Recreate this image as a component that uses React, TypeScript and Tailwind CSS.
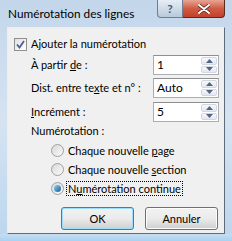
import React from 'react';

const font = { fontFamily: 'Lato, "Liberation Sans", sans-serif' };

function Spin({ value }: { value: string }) {
  return (
    <div className="flex h-[20px] w-[66px] items-stretch border border-[#abadb3] border-t-[#8e8f8f] bg-white">
      <div className="flex flex-1 items-center pl-[3px] text-[12px] text-black">{value}</div>
      <div className="my-[1px] mr-[1px] flex w-[16px] flex-col gap-[1px]">
        <div className="flex flex-1 items-center justify-center rounded-[2px] border border-[#d3d8e0] bg-gradient-to-b from-[#f7f8fa] to-[#e3e7ee]">
          <svg width="7" height="4" viewBox="0 0 7 4">
            <path d="M0 4 L3.5 0 L7 4 Z" fill="#4f6685" />
          </svg>
        </div>
        <div className="flex flex-1 items-center justify-center rounded-[2px] border border-[#d3d8e0] bg-gradient-to-b from-[#f7f8fa] to-[#e3e7ee]">
          <svg width="7" height="4" viewBox="0 0 7 4">
            <path d="M0 0 L3.5 4 L7 0 Z" fill="#4f6685" />
          </svg>
        </div>
      </div>
    </div>
  );
}

function Row({ label, value }: { label: React.ReactNode; value: string }) {
  return (
    <div className="flex h-[20px] items-center justify-between pl-[23px] pr-[5px]">
      <span className="whitespace-nowrap">{label}</span>
      <Spin value={value} />
    </div>
  );
}

function Radio({ checked, children }: { checked?: boolean; children: React.ReactNode }) {
  return (
    <div className="flex h-[19px] items-center pl-[43px]">
      <div className="flex h-[13px] w-[13px] items-center justify-center rounded-full border border-[#a0a0a0] bg-gradient-to-br from-[#d8d8d8] to-[#fafafa]">
        {checked && <div className="h-[7px] w-[7px] rounded-full bg-gradient-to-br from-[#8fd0f5] to-[#0d5d9c]" />}
      </div>
      <span className={'ml-[3px] whitespace-nowrap px-[1px] leading-[13px] ' + (checked ? 'outline-1 outline-dotted outline-black' : '')}>
        {children}
      </span>
    </div>
  );
}

const App: React.FC = () => {
  return (
    <div
      className="relative flex h-[241px] w-[232px] flex-col bg-gradient-to-b from-[#c3d6ea] via-[#d5e3f1] to-[#bcd6ee] text-[11px] leading-[14px] text-black"
      style={font}
    >
      {/* Title bar */}
      <div className="flex h-[27px] items-start">
        <div className="whitespace-nowrap pl-[8px] pt-[7px] text-[11.8px]">Numérotation des lignes</div>
        <div className="ml-auto mr-[7px] flex h-[18px]">
          <div className="flex w-[26px] items-center justify-center rounded-bl-[4px] border border-t-0 border-[#6f7f92] bg-gradient-to-b from-[#e6eef6] to-[#b9c9da] text-[12px] font-bold text-[#4a5a6c]">
            ?
          </div>
          <div className="flex w-[42px] items-center justify-center rounded-br-[4px] border border-l-0 border-t-0 border-[#5a2a22] bg-gradient-to-b from-[#e8a493] via-[#cf5b43] to-[#c2402a]">
            <svg width="12" height="10" viewBox="0 0 12 10">
              <path d="M1 1 L11 9 M11 1 L1 9" stroke="#5a1f14" strokeWidth="3.4" strokeLinecap="round" />
              <path d="M1 1 L11 9 M11 1 L1 9" stroke="#ffffff" strokeWidth="2" strokeLinecap="round" />
            </svg>
          </div>
        </div>
      </div>

      {/* Client area */}
      <div className="mx-[7px] flex h-[207px] flex-col border border-[#e9eef4] border-b-[#5f6b78] border-r-[#5f6b78] bg-[#f0f0f0]">
        <div className="mt-[9px] flex h-[14px] items-center pl-[6px]">
          <div className="flex h-[13px] w-[13px] items-center justify-center border border-[#8f8f8f] bg-gradient-to-br from-[#e0e0e0] to-[#ffffff]">
            <svg width="9" height="9" viewBox="0 0 9 9">
              <path d="M1 4.5 L3.5 7.5 L8 1" fill="none" stroke="#4a5f97" strokeWidth="1.8" />
            </svg>
          </div>
          <span className="ml-[4px] whitespace-nowrap">Ajouter la numérotation</span>
        </div>

        <div className="mt-[4px]">
          <Row label={<>À partir <u>d</u>e :</>} value="1" />
        </div>
        <div className="mt-[3px]">
          <Row label={<>Dist. entre te<u>x</u>te et n° :</>} value="Auto" />
        </div>
        <div className="mt-[4px]">
          <Row label={<><u>I</u>ncrément :</>} value="5" />
        </div>

        <div className="mt-[1px] flex h-[16px] items-center pl-[23px]">Numérotation :</div>
        <div className="mt-[2px]">
          <Radio>Chaque nouvelle <u>p</u>age</Radio>
          <Radio>Chaque nouvelle <u>s</u>ection</Radio>
          <Radio checked>N<u>u</u>mérotation continue</Radio>
        </div>

        <div className="mt-[9px] flex gap-[11px] pl-[53px]">
          <button className="h-[23px] w-[73px] rounded-[3px] border border-[#3c7fb1] bg-gradient-to-b from-[#f2f2f2] via-[#ebebeb] to-[#cfcfcf] shadow-[inset_0_0_0_1px_#9fdcf7]">
            OK
          </button>
          <button className="h-[23px] w-[73px] rounded-[3px] border border-[#707070] bg-gradient-to-b from-[#f2f2f2] via-[#ebebeb] to-[#cfcfcf] shadow-[inset_0_0_0_1px_#fcfcfc]">
            Annuler
          </button>
        </div>
      </div>
      <div className="flex-1 bg-gradient-to-b from-[#c9dcef] to-[#a6d3f2]" />
    </div>
  );
};

export default App;
